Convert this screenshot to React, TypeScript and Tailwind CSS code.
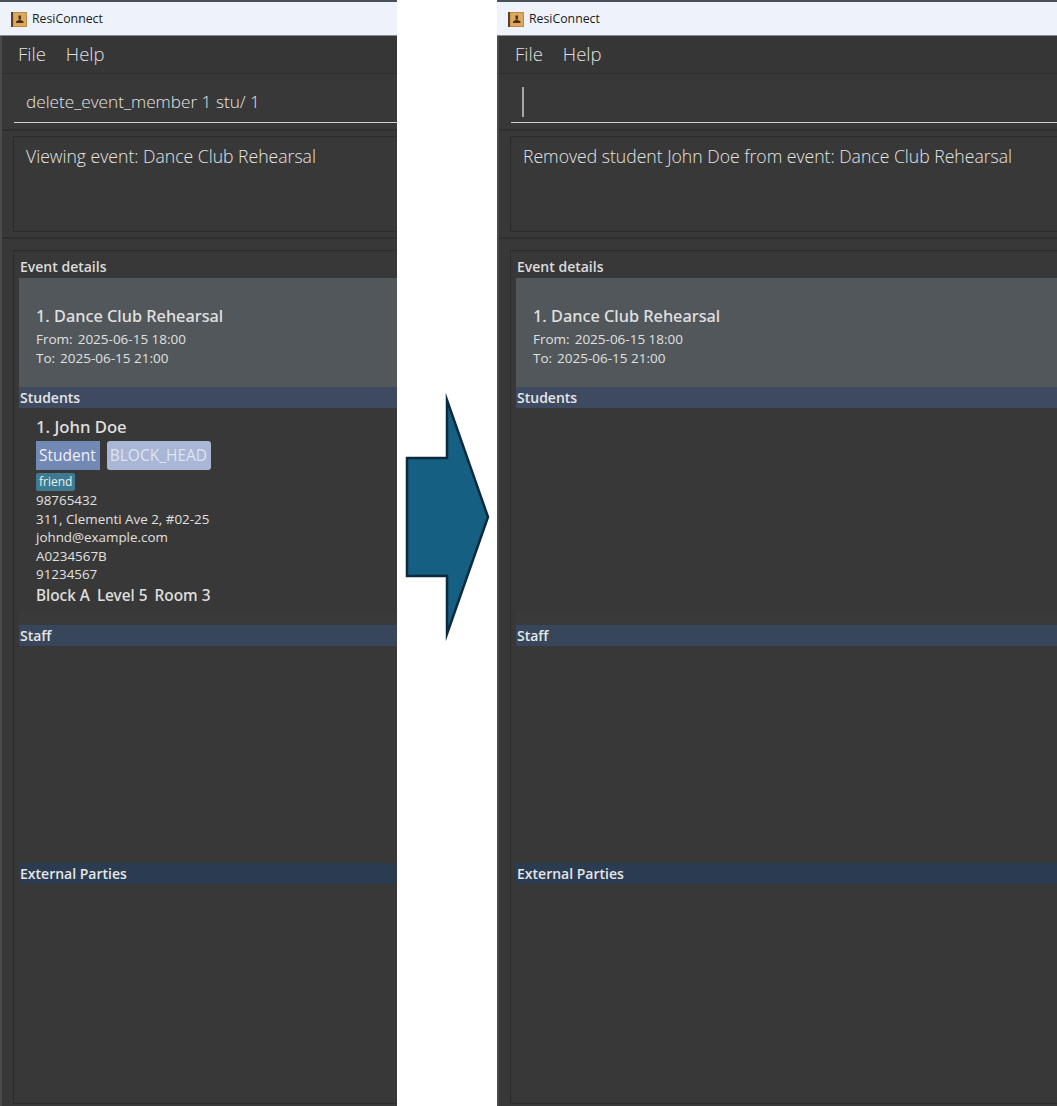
import type { ReactNode } from 'react'

const font = { fontFamily: '"Open Sans", "Noto Sans", sans-serif' }

const AppIcon = () => (
    <svg width="16" height="15" viewBox="0 0 16 15">
        <rect x="0" y="0" width="16" height="15" fill="#b98a4c" />
        <rect x="0" y="0" width="2" height="15" fill="#5e4020" />
        <rect x="2.5" y="1" width="12.5" height="13" fill="#dda95f" />
        <rect x="7.5" y="3.5" width="2.5" height="4" fill="#4a3214" />
        <path d="M5 11 L12.5 11 L12.5 9.5 L10 8 L7.5 8 L5 9.5 Z" fill="#4a3214" />
    </svg>
)

const Arrow = () => (
    <svg
        width="86"
        height="254"
        viewBox="0 0 86 254"
        className="absolute left-[405px] top-[390px]"
    >
        <path
            d="M2 68 L42 68 L42 10 L83 127 L42 244 L42 186 L2 186 Z"
            fill="#156082"
            stroke="#0c2a3e"
            strokeWidth="2.5"
            strokeMiterlimit="10"
        />
    </svg>
)

const SectionHeader = ({
    title,
    className,
}: {
    title: string
    className: string
}) => (
    <div
        className={`h-[21px] pl-[1px] flex items-center text-[14px] font-semibold text-[#e4e6e8] ${className}`}
    >
        {title}
    </div>
)

const StudentCard = () => (
    <div className="h-[204px] pl-[17px] pt-[8px] text-[#e0e0e0]">
        <div className="font-['Noto_Sans'] text-[16.7px] leading-[22px] font-medium">1. John Doe</div>
        <div className="flex gap-[7px] mt-[3px]">
            <span className="h-[29px] pl-[3px] pr-[4px] flex items-center text-[15.5px] text-[#eef0f6] bg-[#7289b5]">
                Student
            </span>
            <span className="h-[29px] pl-[3px] pr-[4px] flex items-center text-[15.5px] text-[#dfe4f0] bg-[#a9b6d6] rounded-[3px]">
                BLOCK_HEAD
            </span>
        </div>
        <div className="mt-[3px] flex w-fit h-[18px] px-[3px] items-center text-[12px] text-[#e8f0f2] bg-[#3e7b91] rounded-[2px]">
            friend
        </div>
        <div className="text-[13.4px] leading-[18.5px]">
            <div>98765432</div>
            <div>311, Clementi Ave 2, #02-25</div>
            <div>johnd@example.com</div>
            <div>A0234567B</div>
            <div>91234567</div>
        </div>
        <div className="font-['Noto_Sans'] flex gap-[7px] text-[15.4px] leading-[22px] font-medium mt-[1px]">
            <span>Block A</span>
            <span>Level 5</span>
            <span>Room 3</span>
        </div>
    </div>
)

const Panel = ({
    width,
    command,
    result,
    students,
}: {
    width: string
    command: ReactNode
    result: string
    students?: ReactNode
}) => (
    <div className={`${width} h-full shrink-0 flex flex-col bg-[#383838] overflow-hidden`}>
        <div className="h-[2px] bg-[#4a5058]" />
        <div className="h-[34px] shrink-0 flex items-center gap-[5px] pl-[11px] pt-[1px] bg-[#eef3fb] border-b border-[#8a8a8a]">
            <AppIcon />
            <span className="text-[12.3px] text-[#1a1a1a]">ResiConnect</span>
        </div>
        <div className="flex-1 min-h-0 flex flex-col border-l-2 border-[#4a4a4a]">
            <div className="h-[38px] shrink-0 flex items-center gap-[20px] pl-[16px] pb-[2px] text-[18.5px] font-light text-[#e0e0e0] bg-[#363636] border-b border-[#2e2e2e]">
                <span>File</span>
                <span>Help</span>
            </div>
            <div className="h-[57px] shrink-0 pl-[12px] border-b-2 border-[#2f2f2f]">
                <div className="h-[49px] pl-[12px] pt-[7px] flex items-center text-[17.2px] font-light text-[#e4e4e4] border-b border-[#d0d0d0]">
                    {command}
                </div>
            </div>
            <div className="h-[108px] shrink-0 pl-[11px] pt-[5px] border-b-2 border-[#2f2f2f]">
                <div className="h-[96px] pl-[12px] pt-[6px] text-[17.6px] leading-[26px] font-light text-[#e4e4e4] border border-r-0 border-[#2c2c2c]">
                    {result}
                </div>
            </div>
            <div className="flex-1 pl-[11px] pt-[11px] pb-[2px] min-h-0">
                <div className="h-full pl-[5px] border-l border-t border-b border-[#2c2c2c] flex flex-col">
                    <div className="h-[27px] flex items-end pb-[1px] pl-[1px] text-[14px] font-semibold text-[#dcdcdc]">
                        Event details
                    </div>
                    <div className="h-[109px] shrink-0 pl-[17px] pt-[27px] bg-[#51575a] text-[#e0e0e0]">
                        <div className="font-['Noto_Sans'] text-[16.3px] leading-[22px] font-medium">
                            1. Dance Club Rehearsal
                        </div>
                        <div className="text-[13.5px] leading-[18.5px] mt-[3px] flex gap-[5px]">
                            <span>From:</span>
                            <span>2025-06-15 18:00</span>
                        </div>
                        <div className="text-[13.5px] leading-[18.5px] flex gap-[5px]">
                            <span>To:</span>
                            <span>2025-06-15 21:00</span>
                        </div>
                    </div>
                    <SectionHeader title="Students" className="bg-[#3e4a5f]" />
                    {students ?? <div className="h-[204px]" />}
                    <div className="h-[13px] bg-[#3a3a3a]" />
                    <SectionHeader title="Staff" className="bg-[#37465a]" />
                    <div className="h-[217px]" />
                    <SectionHeader title="External Parties" className="bg-[#2b3b50]" />
                    <div className="flex-1" />
                </div>
            </div>
        </div>
    </div>
)

const App = () => {
    return (
        <div
            className="relative h-[1106px] w-[1057px] flex justify-between bg-white overflow-hidden"
            style={font}
        >
            <Panel
                width="w-[397px]"
                command="delete_event_member 1 stu/ 1"
                result="Viewing event: Dance Club Rehearsal"
                students={<StudentCard />}
            />
            <Panel
                width="w-[560px]"
                command={<span className="block w-[2px] h-[30px] bg-[#a8a8a8] -ml-[1px]" />}
                result="Removed student John Doe from event: Dance Club Rehearsal"
            />
            <Arrow />
        </div>
    )
}

export default App
